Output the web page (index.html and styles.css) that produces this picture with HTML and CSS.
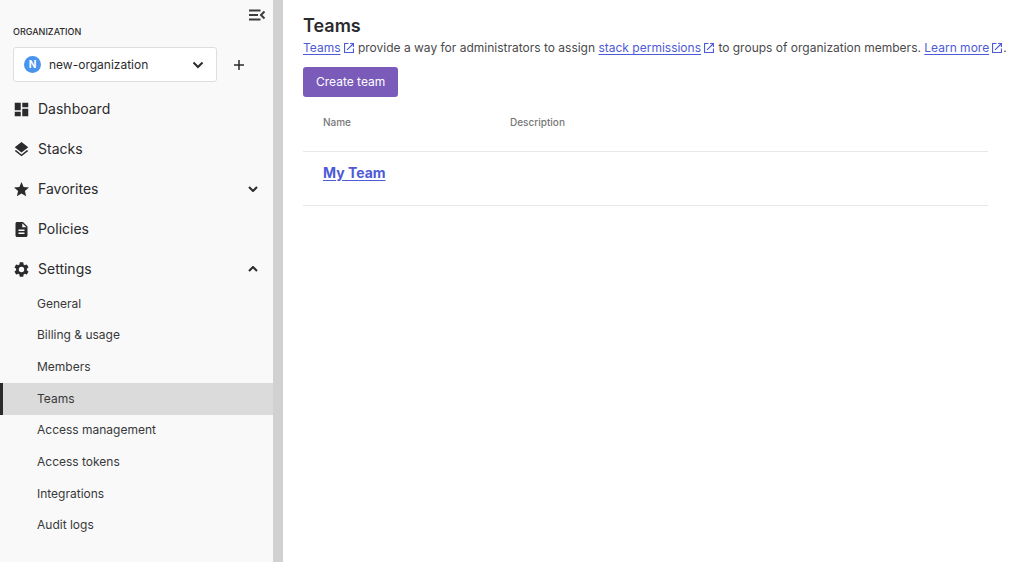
FILE: index.html
```html
<!DOCTYPE html>
<html lang="en">
<head>
<meta charset="utf-8">
<meta name="viewport" content="width=device-width, initial-scale=1">
<title>Teams</title>
<link rel="stylesheet" href="styles.css">
</head>
<body>
<svg class="sprite" aria-hidden="true">
  <symbol id="external" viewBox="3 3 18 18"><path d="M19 19H5V5h6V3H3v18h18v-8h-2v6zM14 3v2h3.590l-9.830 9.830 1.410 1.410L19 6.410V10h2V3h-7z"/></symbol>
</svg>
<div class="app">
  <aside class="sidebar">
    <div class="sidebar-top">
      <button class="icon-button" type="button" aria-label="Collapse menu">
        <svg class="icon-collapse" viewBox="0 0 18 12"><path d="M1 1.500h11.500M1 6h9M1 10.500h11.500M16.500 2.500L13 6l3.500 3.500"/></svg>
      </button>
    </div>
    <label class="org-label" for="org">ORGANIZATION</label>
    <div class="org-row">
      <div class="org-picker">
        <select class="org-select" id="org"><option>new-organization</option></select>
        <span class="org-avatar" aria-hidden="true">N</span>
        <svg class="org-chevron" viewBox="0 0 12 8"><path d="M1.500 1.500L6 6l4.500-4.500"/></svg>
      </div>
      <button class="icon-button" type="button" aria-label="Add organization">
        <svg class="icon-plus" viewBox="0 0 12 12"><path d="M6 1v10M1 6h10"/></svg>
      </button>
    </div>
    <nav class="nav">
      <a class="nav-item" href="#">
        <svg class="nav-icon" viewBox="2 2 20 20"><path d="M3 13h8V3H3v10zm0 8h8v-6H3v6zm10 0h8V11h-8v10zm0-18v6h8V3h-8z"/></svg>
        <span class="nav-text">Dashboard</span>
      </a>
      <a class="nav-item" href="#">
        <svg class="nav-icon" viewBox="2 2 20 20"><path d="M12 18.540l-7.370-5.730L3 14.070l9 7 9-7-1.630-1.270-7.380 5.740zM12 16l7.360-5.730L21 9l-9-7-9 7 1.630 1.270L12 16z"/></svg>
        <span class="nav-text">Stacks</span>
      </a>
      <button class="nav-item" type="button" aria-expanded="false">
        <svg class="nav-icon" viewBox="2 2 20 20"><path d="M12 17.270L18.180 21l-1.640-7.030L22 9.240l-7.190-.61L12 2 9.190 8.630 2 9.240l5.460 4.730L5.820 21z"/></svg>
        <span class="nav-text">Favorites</span>
        <svg class="nav-chevron" viewBox="0 0 10 6"><path d="M1 1l4 4 4-4"/></svg>
      </button>
      <a class="nav-item" href="#">
        <svg class="nav-icon" viewBox="2 2 20 20"><path d="M14 2H6c-1.100 0-2 .9-2 2v16c0 1.100.9 2 2 2h12c1.100 0 2-.9 2-2V8l-6-6zm2 16H8v-2h8v2zm0-4H8v-2h8v2zm-3-5V3.500L18.500 9H13z"/></svg>
        <span class="nav-text">Policies</span>
      </a>
      <button class="nav-item" type="button" aria-expanded="true">
        <svg class="nav-icon" viewBox="2 2 20 20"><path d="M19.140 12.940c.04-.3.060-.61.060-.94 0-.32-.02-.64-.07-.94l2.030-1.580a.49.490 0 0 0 .12-.61l-1.920-3.320a.49.490 0 0 0-.59-.22l-2.390.96c-.5-.38-1.030-.7-1.620-.94l-.36-2.540a.48.480 0 0 0-.48-.41h-3.840c-.24 0-.43.170-.47.410l-.36 2.540c-.59.240-1.130.57-1.620.94l-2.390-.96a.48.480 0 0 0-.59.220L2.740 8.870a.48.480 0 0 0 .12.610l2.030 1.580c-.05.3-.09.630-.09.940s.02.640.070.940l-2.030 1.580a.49.490 0 0 0-.12.610l1.920 3.320c.12.220.37.290.59.220l2.390-.96c.5.380 1.030.7 1.620.94l.36 2.540c.05.240.24.410.48.410h3.840c.24 0 .44-.17.470-.41l.36-2.540c.59-.24 1.130-.56 1.620-.94l2.390.96c.22.080.47 0 .59-.22l1.920-3.320a.48.480 0 0 0-.12-.61l-2.010-1.580zM12 15.600A3.600 3.600 0 1 1 12 8.400a3.600 3.600 0 0 1 0 7.200z"/></svg>
        <span class="nav-text">Settings</span>
        <svg class="nav-chevron" viewBox="0 0 10 6"><path d="M1 5l4-4 4 4"/></svg>
      </button>
      <div class="subnav">
        <a class="subnav-item" href="#">General</a>
        <a class="subnav-item" href="#">Billing &amp; usage</a>
        <a class="subnav-item" href="#">Members</a>
        <a class="subnav-item is-active" href="#" aria-current="page">Teams</a>
        <a class="subnav-item" href="#">Access management</a>
        <a class="subnav-item" href="#">Access tokens</a>
        <a class="subnav-item" href="#">Integrations</a>
        <a class="subnav-item" href="#">Audit logs</a>
      </div>
    </nav>
  </aside>
  <main class="content">
    <h1 class="title">Teams</h1>
    <p class="intro"><a class="link" href="#">Teams</a><svg class="icon-external"><use href="#external"/></svg> provide a way for administrators to assign <a class="link" href="#">stack permissions</a><svg class="icon-external"><use href="#external"/></svg> to groups of organization members. <a class="link" href="#">Learn more</a><svg class="icon-external"><use href="#external"/></svg>.</p>
    <div class="panel">
      <button class="primary-button" type="button">Create team</button>
      <table class="teams">
        <thead>
          <tr><th class="col-name" scope="col">Name</th><th scope="col">Description</th></tr>
        </thead>
        <tbody>
          <tr><td><a class="link team-link" href="#">My Team</a></td><td></td></tr>
        </tbody>
      </table>
    </div>
  </main>
</div>
</body>
</html>
```
FILE: styles.css
```css
* {
  box-sizing: border-box;
}

body {
  margin: 0;
  font-family: Inter, "Liberation Sans", sans-serif;
  font-size: 12px;
  line-height: 16px;
  color: #4a4a4c;
  background: #fff;
}

button,
select {
  font: inherit;
  color: inherit;
}

.sprite {
  display: none;
}

.app {
  display: flex;
  min-height: 100vh;
}

.sidebar {
  flex: 0 0 283px;
  border-right: 10px solid #d1d1d1;
  background: #f9f9f9;
  color: #2b2b2d;
}

.sidebar-top {
  display: flex;
  justify-content: flex-end;
  padding: 9px 7px 0 0;
}

.icon-button {
  display: flex;
  padding: 0;
  border: 0;
  background: none;
  cursor: pointer;
}

.icon-collapse {
  width: 18px;
  height: 12px;
  fill: none;
  stroke: #3c3c3e;
  stroke-width: 2;
}

.org-label {
  display: block;
  padding: 3px 13px 7px;
  font-size: 9px;
  font-weight: 500;
}

.org-row {
  display: flex;
  align-items: center;
  gap: 16px;
  padding-left: 13px;
}

.org-picker {
  position: relative;
  width: 204px;
}

.org-select {
  appearance: none;
  width: 100%;
  height: 35px;
  padding: 0 32px 0 35px;
  border: 1px solid #dedede;
  border-radius: 3px;
  background: #fff;
}

.org-avatar {
  position: absolute;
  top: 9px;
  left: 11px;
  width: 17px;
  height: 17px;
  border-radius: 50%;
  background: #4a94ee;
  color: #fff;
  font-size: 10px;
  font-weight: 700;
  line-height: 17px;
  text-align: center;
  pointer-events: none;
}

.org-chevron {
  position: absolute;
  top: 14px;
  right: 13px;
  width: 12px;
  height: 8px;
  fill: none;
  stroke: #2b2b2d;
  stroke-width: 2;
  pointer-events: none;
}

.icon-plus {
  width: 12px;
  height: 12px;
  fill: none;
  stroke: #2b2b2d;
  stroke-width: 1.500;
}

.nav {
  padding-top: 7px;
}

.nav-item {
  display: flex;
  align-items: center;
  gap: 9px;
  width: 100%;
  height: 40px;
  padding: 0 15px 0 14px;
  border: 0;
  background: none;
  color: inherit;
  font-size: 14px;
  font-weight: 400;
  text-align: left;
  text-decoration: none;
  cursor: pointer;
}

.nav-icon {
  width: 15px;
  height: 15px;
  fill: #2b2b2d;
}

.nav-text {
  flex: 1;
}

.nav-chevron {
  width: 10px;
  height: 6px;
  fill: none;
  stroke: #2b2b2d;
  stroke-width: 2;
}

.subnav {
  display: grid;
  grid-auto-rows: 1fr;
  min-height: 253px;
  margin-top: -1px;
}

.subnav-item {
  display: flex;
  align-items: center;
  padding-left: 34px;
  border-left: 3px solid transparent;
  color: #38383a;
  text-decoration: none;
}

.subnav-item.is-active {
  border-left-color: #2b2b2d;
  background: #dbdbdb;
}

.content {
  flex: 1;
  min-width: 0;
  padding: 14px 12px 16px 20px;
}

.title {
  margin: 0;
  font-size: 18px;
  font-weight: 600;
  line-height: 24px;
  color: #2b2b2d;
}

.intro {
  margin: 2px 0 11px;
}

.link {
  color: #4d5bd6;
  text-decoration: underline;
  text-underline-offset: 2px;
}

.icon-external {
  width: 10px;
  height: 10px;
  margin: 0 1px 0 3px;
  vertical-align: -1px;
  fill: #4d5bd6;
}

.panel {
  margin-right: 24px;
}

.primary-button {
  display: block;
  height: 30px;
  padding: 0 13px;
  border: 0;
  border-radius: 3px;
  background: #7b5bb9;
  color: #fff;
  cursor: pointer;
}

.teams {
  width: 100%;
  border-collapse: collapse;
}

.teams th,
.teams td {
  padding: 0 20px;
  border-bottom: 1px solid #e8e8e8;
  text-align: left;
  vertical-align: top;
}

.teams th {
  height: 54px;
  padding-top: 17px;
  font-size: 10px;
  font-weight: 500;
  color: #777;
}

.teams td {
  height: 54px;
  padding-top: 13px;
}

.col-name {
  width: 187px;
}

.team-link {
  font-size: 14px;
  font-weight: 700;
}
```
